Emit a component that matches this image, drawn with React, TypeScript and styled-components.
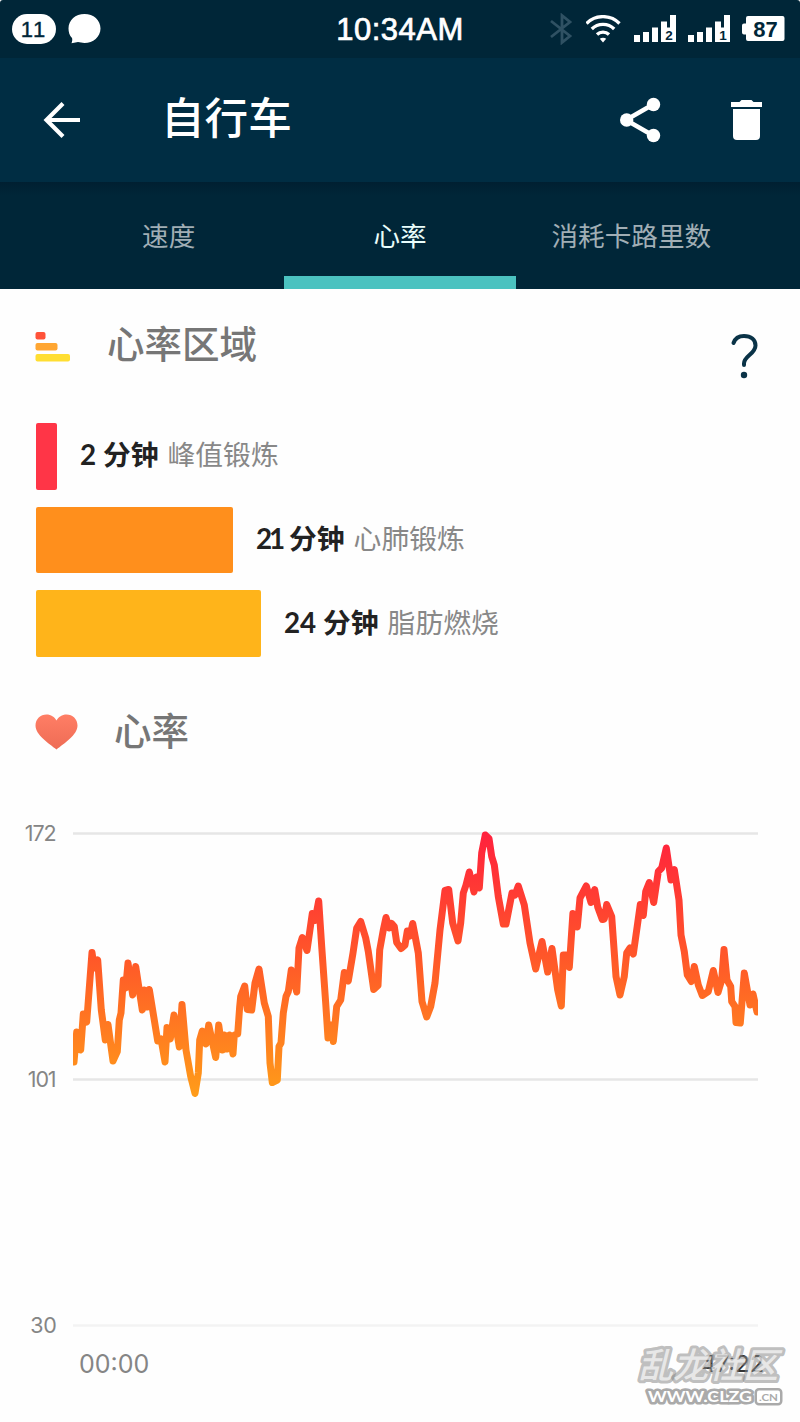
import React from "react";
import styled, { createGlobalStyle } from "styled-components";

const Global = createGlobalStyle`
  * { box-sizing: border-box; }
  body { margin: 0; background: #fff; }
`;

const CJK = `"Noto Sans CJK SC", sans-serif`;

const Screen = styled.div`
  position: relative;
  width: 800px;
  height: 1422px;
  display: flex;
  flex-direction: column;
  background: #fefefe;
  font-family: Lato, ${CJK};
  overflow: hidden;
`;

const StatusBar = styled.div`
  height: 58px;
  flex: none;
  display: grid;
  grid-template-columns: 1fr auto 1fr;
  align-items: center;
  padding: 0 15px 1px 12px;
  background: #002638;
  color: #fff;
  border-radius: 3px 3px 0 0;
`;

const StatusGroup = styled.div<{ $end?: boolean }>`
  display: flex;
  align-items: center;
  justify-content: ${(p) => (p.$end ? "flex-end" : "flex-start")};
  gap: 12px;
`;

const CountPill = styled.span`
  width: 44px;
  height: 30px;
  border-radius: 15px;
  background: #fff;
  color: #002638;
  font: 400 22px/31px "Liberation Sans", sans-serif;
  font-kerning: none;
  -webkit-text-stroke: 0.4px #002638;
  padding-right: 2px;
  text-align: center;
`;

const Clock = styled.span`
  font: 400 31px/36px "Liberation Sans", sans-serif;
  -webkit-text-stroke: 0.7px #fff;
  letter-spacing: 0.5px;
  padding: 3px 0 0 3px;
`;

const AppBar = styled.header`
  height: 124px;
  flex: none;
  display: flex;
  align-items: center;
  padding: 0 37px 0 43px;
  background: #002d43;
  color: #fff;
`;

const Title = styled.h1`
  flex: 1;
  margin: 0 0 10px 80px;
  font: 500 43.6px/60px ${CJK};
`;

const Actions = styled.div`
  display: flex;
  align-items: center;
  gap: 68px;
`;

const Tabs = styled.nav`
  height: 107px;
  flex: none;
  display: flex;
  padding: 0 53px;
  background: linear-gradient(#001f31, #002638 14px);
`;

const Tab = styled.div<{ $active?: boolean }>`
  flex: 1;
  display: flex;
  align-items: center;
  justify-content: center;
  padding-top: 12px;
  border-bottom: 13px solid ${(p) => (p.$active ? "#4bc2c0" : "transparent")};
  color: ${(p) => (p.$active ? "#e9fdfb" : "#a0aeb5")};
  font: 400 26.6px/40px ${CJK};
  white-space: nowrap;
`;

const SectionHead = styled.div<{ $top: number; $gap: number }>`
  display: flex;
  align-items: center;
  gap: ${(p) => p.$gap}px;
  height: 56px;
  margin-top: ${(p) => p.$top}px;
  padding: 0 40px 0 35px;
`;

const SectionTitle = styled.h2<{ $lift: number }>`
  flex: 1;
  margin: 0 0 ${(p) => p.$lift}px;
  color: #767676;
  font: 500 37.5px/50px ${CJK};
`;

const HelpIcon = styled.svg`
  flex: none;
  margin-top: 18px;
`;

const Zones = styled.div`
  display: flex;
  flex-direction: column;
  gap: 17px;
  margin-top: 48px;
  padding-left: 35.5px;
`;

const ZoneRow = styled.div`
  display: flex;
  align-items: center;
  gap: 23px;
  height: 66.7px;
`;

const ZoneBar = styled.div<{ $width: number; $color: string }>`
  width: ${(p) => p.$width}px;
  height: 100%;
  border-radius: 2px;
  background: ${(p) => p.$color};
`;

const ZoneText = styled.div`
  display: flex;
  gap: 9px;
  padding-bottom: 2px;
  font: 400 27.8px/40px Lato, ${CJK};
  color: #888;
  white-space: nowrap;
`;

const Minutes = styled.span`
  color: #222;
  font: 700 27.8px/40px Lato, ${CJK};
`;

const Digits = styled.span<{ $tight?: boolean }>`
  letter-spacing: ${(p) => (p.$tight ? -3 : 0)}px;
`;

const ChartRow = styled.div`
  display: flex;
  margin-top: 58px;
`;

const YAxis = styled.div`
  width: 57px;
  height: 522px;
  margin-right: 16px;
  display: flex;
  flex-direction: column;
  justify-content: space-between;
  text-align: right;
  font: 400 21.5px/30px Inter, sans-serif;
  color: #858585;
`;

const YLabel = styled.span<{ $tight?: boolean }>`
  letter-spacing: ${(p) => (p.$tight ? -1.1 : -0.3)}px;
  padding-right: ${(p) => (p.$tight ? 1.5 : 0.5)}px;
`;

const Plot = styled.svg`
  display: block;
`;

const TimeAxis = styled.div`
  display: flex;
  justify-content: space-between;
  margin-top: 8px;
  padding: 0 36px 0 79px;
  font: 400 25px/32px Inter, sans-serif;
  color: #858585;
`;

const EndTime = styled.span`
  color: #333;
  font-size: 23.5px;
`;

const Watermark = styled.svg`
  position: absolute;
  right: 12px;
  bottom: 12px;
  overflow: visible;
`;

const HEART_RATE =
  "74,1062 76.7,1032 80.7,1050 83.3,1014 86.7,1022 92,952.5 94.3,968 97.7,960 101.3,1010 105.3,1040 108,1024.5 113,1061 117.3,1051.5 119.3,1020 121,1013 123.3,980 125.7,988 128,963 132.7,995 135.7,966.5 142.3,1010 144.3,990 147.3,1007 149.3,989.5 157.7,1041 161,1039 165,1062 167,1027.5 170.3,1039 174,1015 179.3,1047 182,1004.5 186,1050 190.7,1076.5 195,1093.5 198.3,1073 199.7,1040 202.3,1031 206,1044 208.7,1025 215.7,1057.5 218.7,1025 222.3,1050 224.3,1035 227.3,1049 229.7,1035 233,1054 234.3,1035 237.7,1034 239.7,1006.5 240.7,996.5 244.7,986 247.3,1009.5 251.7,1010 255,983 259,969 264.3,1003 268.3,1016.5 270,1063 272.3,1082.5 277.3,1080 279,1046.5 281,1043 283.3,1013 286,996.5 288.3,991.5 291.3,970 296.7,992 299,948 302.3,937.5 307,950.5 312.3,913.5 315,920.5 318.7,901 321.7,946.5 325.7,1003 328,1038 331,1025 333.3,1041.5 336.7,1006.5 340.7,1000 344.3,972.5 348.3,981 353,953 356.7,928 360.7,921.5 365.7,938 368.3,951.5 373.7,989.5 378,985.5 379.7,950 383.3,930 386,917.5 389.3,928 391.7,923.5 394.3,926.5 396.7,942.5 401,948.5 405,945 407.3,931 410,936 412.7,923.5 418.3,953 422,1001.5 426.7,1017 430.7,1006.5 435,983 440,930 445,890.5 448.7,889.5 452.7,923 458,941 460.7,923 463.3,893 466,885 469.3,872 474,892 476.7,877 479.3,888 481.7,853 485.3,835 489,838.5 491.7,856.5 494.3,865 498.3,896.5 503.3,924 506,924 512,893 515,895 518.3,886 524.3,905 530,943 535.7,969 542,941.5 547.7,972 552,948.5 557.7,990 561.3,1006 563.3,955 566.3,955 569.3,967.5 572.9,913.5 577.3,927 580,898 586.3,886 591,902.5 594.7,889.5 597.7,907 602.3,919.5 604.3,919 606.7,904.5 611.7,916.5 616,976.5 620,995 624.3,976.5 626.7,953 630,948 633.3,954 637.7,923 640.3,904.5 643.3,915.5 645.7,891.5 649.3,882.5 653.7,902.5 658.3,871.5 661.7,868 666.3,848 671,880 674.3,869.5 679,900 681,935 684.3,951.5 687.3,975 691.3,981.5 694.3,966.5 698.3,985 702.3,995.5 708.3,991.5 713.3,970.5 718,992.5 721.7,980 724,949.5 727,980 730.7,986.5 731.7,1001.5 735,1006.5 736,1022.5 740.3,1023 744.3,973 750,1005 753,994 757,1012";

const SignalIcon = ({ sim }: { sim: string }) => (
  <svg width="42" height="28" viewBox="0 0 42 28">
    <path
      fill="#fff"
      d="M0 20h6v7H0zM9 17h6v10H9zM18 12.500h6V27h-6zM27 6.500h6V12.500h3V0h6v27H27z"
    />
    <text x="35" y="25" textAnchor="middle" fontFamily="Liberation Sans" fontWeight="700" fontSize="13.500" fill="#002638">
      {sim}
    </text>
  </svg>
);

const zones = [
  { width: 21.5, color: "#ff3547", minutes: "2", name: "峰值锻炼" },
  { width: 197.5, color: "#ff8f1c", minutes: "21", name: "心肺锻炼" },
  { width: 225.5, color: "#ffb41a", minutes: "24", name: "脂肪燃烧" },
];

export default function App() {
  return (
    <Screen>
      <Global />
      <StatusBar>
        <StatusGroup>
          <CountPill>11</CountPill>
          <svg width="33" height="30" viewBox="0 0 33 30">
            <path fill="#fff" d="M16.500 0C25.500 0 32.500 6 32.500 14.500S25 29 16.500 29c-2.500 0-4.500-1-6.500-1L3.500 29.300c.8-2 1-4 .5-5.300C1.500 21.500.500 18 .5 14.500.5 6 7.500 0 16.500 0z" />
          </svg>
        </StatusGroup>
        <Clock>10:34AM</Clock>
        <StatusGroup $end>
          <svg width="24" height="32" viewBox="0 0 24 32" fill="none" stroke="#2f5163" strokeWidth="2.800">
            <path d="M1 8l19 15-8 6.500V2.500L20 9 1 24" />
          </svg>
          <svg width="36" height="28" viewBox="0 0 36 28" fill="none" stroke="#fff" strokeWidth="3.300">
            <path d="M.5 8.500C9.500-.7 24.500-.7 33.500 8.500M5.800 14c6-6.200 16.400-6.200 22.400 0M11 19.500c3.300-3.300 8.700-3.300 12 0" />
            <path d="M13.800 23.800c1.800-1.500 4.600-1.500 6.400 0L17 27.500z" fill="#fff" stroke="none" />
          </svg>
          <SignalIcon sim="2" />
          <SignalIcon sim="1" />
          <svg width="43" height="26" viewBox="0 0 43 26">
            <path fill="#fff" d="M6 0h34.500a2 2 0 0 1 2 2v21a2 2 0 0 1-2 2H6a2 2 0 0 1-2-2v-4.500H2a2 2 0 0 1-2-2v-7a2 2 0 0 1 2-2h2V2a2 2 0 0 1 2-2z" />
            <text x="23.500" y="20.500" textAnchor="middle" fontFamily="Liberation Sans" fontWeight="700" fontSize="22" fill="#002638">87</text>
          </svg>
        </StatusGroup>
      </StatusBar>

      <AppBar>
        <svg width="38" height="38" viewBox="0 0 38 38" fill="none" stroke="#fff" strokeWidth="4.200">
          <path d="M37 19H5M20 2.500L3.500 19 20 35.500" />
        </svg>
        <Title>自行车</Title>
        <Actions>
          <svg width="44" height="46" viewBox="0 0 44 46">
            <path d="M35 7.500L8 23l27 15.500" fill="none" stroke="#fff" strokeWidth="4.500" />
            <g fill="#fff">
              <circle cx="35.500" cy="7.500" r="6.700" />
              <circle cx="8.700" cy="23" r="6.700" />
              <circle cx="35.500" cy="38.500" r="6.700" />
            </g>
          </svg>
          <svg width="33" height="42" viewBox="0 0 33 42">
            <path fill="#fff" d="M1 3h8.500l2-2h10l2 2H32v5H1zM3 10h27v27a4 4 0 0 1-4 4H7a4 4 0 0 1-4-4z" />
          </svg>
        </Actions>
      </AppBar>

      <Tabs>
        <Tab>速度</Tab>
        <Tab $active>心率</Tab>
        <Tab>消耗卡路里数</Tab>
      </Tabs>

      <SectionHead $top={30} $gap={37}>
        <svg width="35" height="30" viewBox="0 0 35 30">
          <rect x="0.500" width="10" height="7.500" rx="2" fill="#ff5239" />
          <rect x="0.500" y="11" width="22" height="7.500" rx="2" fill="#ffa632" />
          <rect x="0.500" y="22" width="34.500" height="7.500" rx="2" fill="#ffde32" />
        </svg>
        <SectionTitle $lift={10}>心率区域</SectionTitle>
        <HelpIcon width="30" height="46" viewBox="0 0 30 46">
          <path d="M3.500 10C5 5.500 9 3 14 3c7 0 11.500 3.500 11.500 9.500C25.500 21 14 23 14 30.500V32" fill="none" stroke="#0a3347" strokeWidth="4" strokeLinecap="round" />
          <circle cx="14" cy="42" r="3.200" fill="#0a3347" />
        </HelpIcon>
      </SectionHead>

      <Zones>
        {zones.map((z) => (
          <ZoneRow key={z.name}>
            <ZoneBar $width={z.width} $color={z.color} />
            <ZoneText>
              <Minutes>
                <Digits $tight={z.minutes.endsWith("1")}>{z.minutes}</Digits> 分钟
              </Minutes>
              <span>{z.name}</span>
            </ZoneText>
          </ZoneRow>
        ))}
      </Zones>

      <SectionHead $top={47} $gap={36}>
        <svg width="43" height="36" viewBox="0 0 43 36">
          <defs>
            <linearGradient id="heart" x1="0" y1="0" x2="0" y2="1">
              <stop offset="0" stopColor="#ff7e65" />
              <stop offset="1" stopColor="#ee6c55" />
            </linearGradient>
          </defs>
          <path fill="url(#heart)" d="M21.500 35.500C14 29.500.5 21 .5 11.500.5 5 5.500.5 11.500.5c4.500 0 8 2.500 10 6 2-3.500 5.500-6 10-6 6 0 11 4.500 11 11 0 9.500-13.500 18-21 24z" />
        </svg>
        <SectionTitle $lift={7}>心率</SectionTitle>
      </SectionHead>

      <ChartRow>
        <YAxis>
          <YLabel $tight>172</YLabel>
          <YLabel $tight>101</YLabel>
          <YLabel>30</YLabel>
        </YAxis>
        <Plot width="685" height="522" viewBox="73 818 685 522">
          <defs>
            <linearGradient id="rate" gradientUnits="userSpaceOnUse" x1="0" y1="833" x2="0" y2="1095">
              <stop offset="0" stopColor="#ff213d" />
              <stop offset="0.5" stopColor="#ff5a28" />
              <stop offset="1" stopColor="#ff9c19" />
            </linearGradient>
          </defs>
          <path d="M73 833.500H758M73 1079.500H758" stroke="#e6e6e6" strokeWidth="2.500" />
          <path d="M73 1325.500H758" stroke="#f3f3f3" strokeWidth="2.500" />
          <polyline points={HEART_RATE} fill="none" stroke="url(#rate)" strokeWidth="7" strokeLinejoin="round" strokeLinecap="round" />
        </Plot>
      </ChartRow>
      <TimeAxis>
        <span>00:00</span>
        <EndTime>47:22</EndTime>
      </TimeAxis>

      <Watermark width="152" height="66" viewBox="0 0 152 66">
        <g fill="#fff" strokeLinejoin="round" paintOrder="stroke">
          <text x="2" y="34" fontFamily="Noto Sans CJK SC" fontSize="35" fontStyle="italic" fontWeight="500" stroke="#888" strokeWidth="6" textLength="140" fillOpacity="0.65" strokeOpacity="0.55">
            乱龙社区
          </text>
          <g stroke="#aaa" strokeWidth="5" fontFamily="Lato" fontWeight="700">
            <text x="12" y="58" fontSize="15" textLength="104" lengthAdjust="spacingAndGlyphs">WWW.CLZG</text>
            <rect x="121" y="46.500" width="23" height="12.500" rx="2" strokeWidth="5" />
            <text x="123" y="57" fontSize="10" textLength="19" lengthAdjust="spacingAndGlyphs" fill="#aaa" stroke="none">.CN</text>
          </g>
        </g>
      </Watermark>
    </Screen>
  );
}
